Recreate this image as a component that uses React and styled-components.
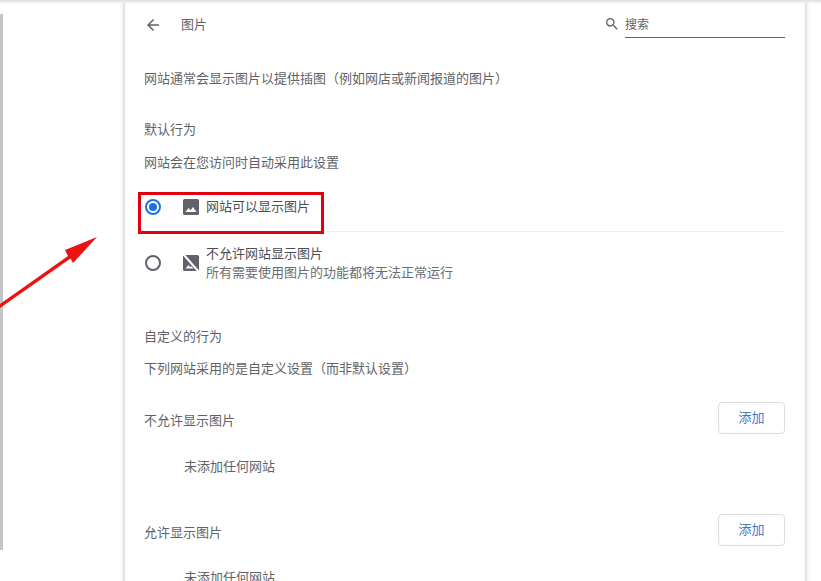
import React from "react";
import styled, { createGlobalStyle } from "styled-components";

const Global = createGlobalStyle`
  html, body { margin: 0; padding: 0; background: #fff; overflow: hidden; }
  body { font-family: "Noto Sans CJK SC", "Liberation Sans", sans-serif; }
`;

const Page = styled.div`
  position: relative;
  width: 821px;
  height: 581px;
  overflow: hidden;
  display: flex;
  background: #fff;
`;

const TopShade = styled.div`
  position: absolute;
  top: 0;
  left: 0;
  right: 0;
  height: 4px;
  background: linear-gradient(#dedede, #eeeeee 50%, rgba(255, 255, 255, 0));
`;

const Gutter = styled.div`
  width: 125px;
  flex: none;
  padding-top: 14px;
  box-sizing: border-box;
`;

const ScrollEdge = styled.div`
  width: 3px;
  height: 536px;
  background: #c4c4c4;
`;

const Card = styled.main`
  width: 680px;
  flex: none;
  height: 640px;
  box-sizing: border-box;
  padding: 0 20px 0 19px;
  background: #fff;
  box-shadow: 0 0 5px rgba(60, 64, 67, 0.4);
  color: #5f6368;
  font-size: 13px;
`;

const Header = styled.header`
  height: 50px;
  display: flex;
  align-items: center;
`;

const BackButton = styled.span`
  width: 18px;
  height: 18px;
  margin-right: 19px;
  display: flex;
`;

const Title = styled.h1`
  flex: 1;
  margin: -3px 0 0;
  font-size: 13px;
  font-weight: 400;
  color: #5f6368;
`;

const Search = styled.div`
  display: flex;
  align-items: flex-start;
  gap: 5px;
  margin-top: 1px;
`;

const SearchField = styled.div`
  width: 160px;
  height: 25px;
  line-height: 22px;
  box-sizing: border-box;
  border-bottom: 1px solid #5f6368;
  font-size: 12px;
  color: #5f6368;
`;

const Line = styled.div`
  height: 20px;
  line-height: 20px;
  margin-top: ${p => p.$top}px;
  color: #5f6368;
  padding-left: ${p => p.$indent || 0}px;
  white-space: nowrap;
`;

const Option = styled.label`
  display: flex;
  align-items: center;
  height: ${p => p.$h}px;
  margin-top: ${p => p.$top || 0}px;
  border-bottom: ${p => p.$rule ? "1px solid #eceef0" : "none"};
  box-sizing: border-box;
`;

const Radio = styled.span`
  width: 16px;
  height: 16px;
  flex: none;
  margin-left: 1px;
  margin-right: 21px;
  border-radius: 50%;
  box-sizing: border-box;
  border: 2px solid ${p => p.$on ? "#1a73e8" : "#5f6368"};
  display: flex;
  align-items: center;
  justify-content: center;
  &::after {
    content: "";
    display: ${p => p.$on ? "block" : "none"};
    width: 8px;
    height: 8px;
    border-radius: 50%;
    background: #1a73e8;
  }
`;

const OptionIcon = styled.span`
  width: 18px;
  height: 18px;
  flex: none;
  margin-right: 6px;
  display: flex;
`;

const OptionText = styled.div`
  margin-top: ${p => p.$shift || 0}px;
`;

const OptionLabel = styled.div`
  color: #4b4f54;
  line-height: 20px;
`;

const OptionSub = styled.div`
  color: #696d72;
  line-height: 18px;
`;

const SiteHead = styled.div`
  display: flex;
  align-items: center;
  justify-content: space-between;
  height: 32px;
  margin-top: ${p => p.$top}px;
`;

const SiteName = styled.span`
  margin-top: ${p => p.$drop}px;
`;

const AddButton = styled.button`
  width: 67px;
  height: 32px;
  padding: 0 0 4px;
  background: #fff;
  border: 1px solid #dadce0;
  border-radius: 4px;
  color: #4a76c8;
  font: inherit;
  font-size: 13px;
`;

const RedBox = styled.div`
  position: absolute;
  left: 138px;
  top: 192px;
  width: 186px;
  height: 42px;
  box-sizing: border-box;
  border: 3px solid #e2000f;
`;

const Arrow = styled.svg`
  position: absolute;
  left: 0;
  top: 230px;
`;

export default function App() {
  return (
    <Page>
      <Global />
      <Gutter><ScrollEdge /></Gutter>
      <Card>
        <Header>
          <BackButton>
            <svg width="18" height="18" viewBox="0 0 24 24" fill="#5f6368"><path d="M20 11H7.83l5.59-5.59L12 4l-8 8 8 8 1.41-1.41L7.83 13H20v-2z" /></svg>
          </BackButton>
          <Title>图片</Title>
          <Search>
            <svg width="16" height="16" viewBox="0 0 24 24" fill="#5f6368" style={{ marginTop: 3 }}><path d="M15.5 14h-.79l-.28-.27A6.47 6.47 0 0 0 16 9.5 6.5 6.5 0 1 0 9.5 16c1.61 0 3.09-.59 4.23-1.57l.27.28v.79l5 4.99L20.49 19l-4.99-5zm-6 0C7.01 14 5 11.99 5 9.5S7.01 5 9.5 5 14 7.01 14 9.5 11.99 14 9.5 14z" /></svg>
            <SearchField>搜索</SearchField>
          </Search>
        </Header>
        <Line $top={18}>网站通常会显示图片以提供插图（例如网店或新闻报道的图片）</Line>
        <Line $top={31}>默认行为</Line>
        <Line $top={13}>网站会在您访问时自动采用此设置</Line>
        <Option $h={50} $top={10} $rule>
          <Radio $on />
          <OptionIcon>
            <svg width="18" height="18" viewBox="0 0 18 18" fill="#5f6368"><path d="M2.5 1h13A1.5 1.5 0 0 1 17 2.5v13a1.5 1.5 0 0 1-1.5 1.5h-13A1.5 1.5 0 0 1 1 15.5v-13A1.5 1.5 0 0 1 2.5 1z M3.5 14h11l-3.5-5-2.6 3.2L6.5 10z" fillRule="evenodd" /></svg>
          </OptionIcon>
          <OptionText $shift={-1}><OptionLabel>网站可以显示图片</OptionLabel></OptionText>
        </Option>
        <Option $h={62}>
          <Radio />
          <OptionIcon>
            <svg width="18" height="18" viewBox="0 0 18 18"><path fill="#5f6368" d="M2.5 1h13A1.5 1.5 0 0 1 17 2.5v13a1.5 1.5 0 0 1-1.5 1.5h-13A1.5 1.5 0 0 1 1 15.5v-13A1.5 1.5 0 0 1 2.5 1z" /><path fill="#fff" d="M3.5 14.5h8l-2.4-2.4-1 1.2L6.5 11z" /><path stroke="#fff" strokeWidth="2" d="M1.5 0.5 16.5 17.5" /></svg>
          </OptionIcon>
          <OptionText $shift={-3}>
            <OptionLabel>不允许网站显示图片</OptionLabel>
            <OptionSub>所有需要使用图片的功能都将无法正常运行</OptionSub>
          </OptionText>
        </Option>
        <Line $top={32}>自定义的行为</Line>
        <Line $top={12}>下列网站采用的是自定义设置（而非默认设置）</Line>
        <SiteHead $top={24}>
          <SiteName $drop={3}>不允许显示图片</SiteName>
          <AddButton>添加</AddButton>
        </SiteHead>
        <Line $top={22} $indent={40}>未添加任何网站</Line>
        <SiteHead $top={38}>
          <SiteName $drop={2}>允许显示图片</SiteName>
          <AddButton>添加</AddButton>
        </SiteHead>
        <Line $top={21} $indent={40}>未添加任何网站</Line>
      </Card>
      <TopShade />
      <RedBox />
      <Arrow width="100" height="85" viewBox="0 0 100 85">
        <path d="M0 74 L68 26 L65 20 L97 7 L73 33 L70.5 28.5 L0 78 Z" fill="#ee1111" />
      </Arrow>
    </Page>
  );
}
